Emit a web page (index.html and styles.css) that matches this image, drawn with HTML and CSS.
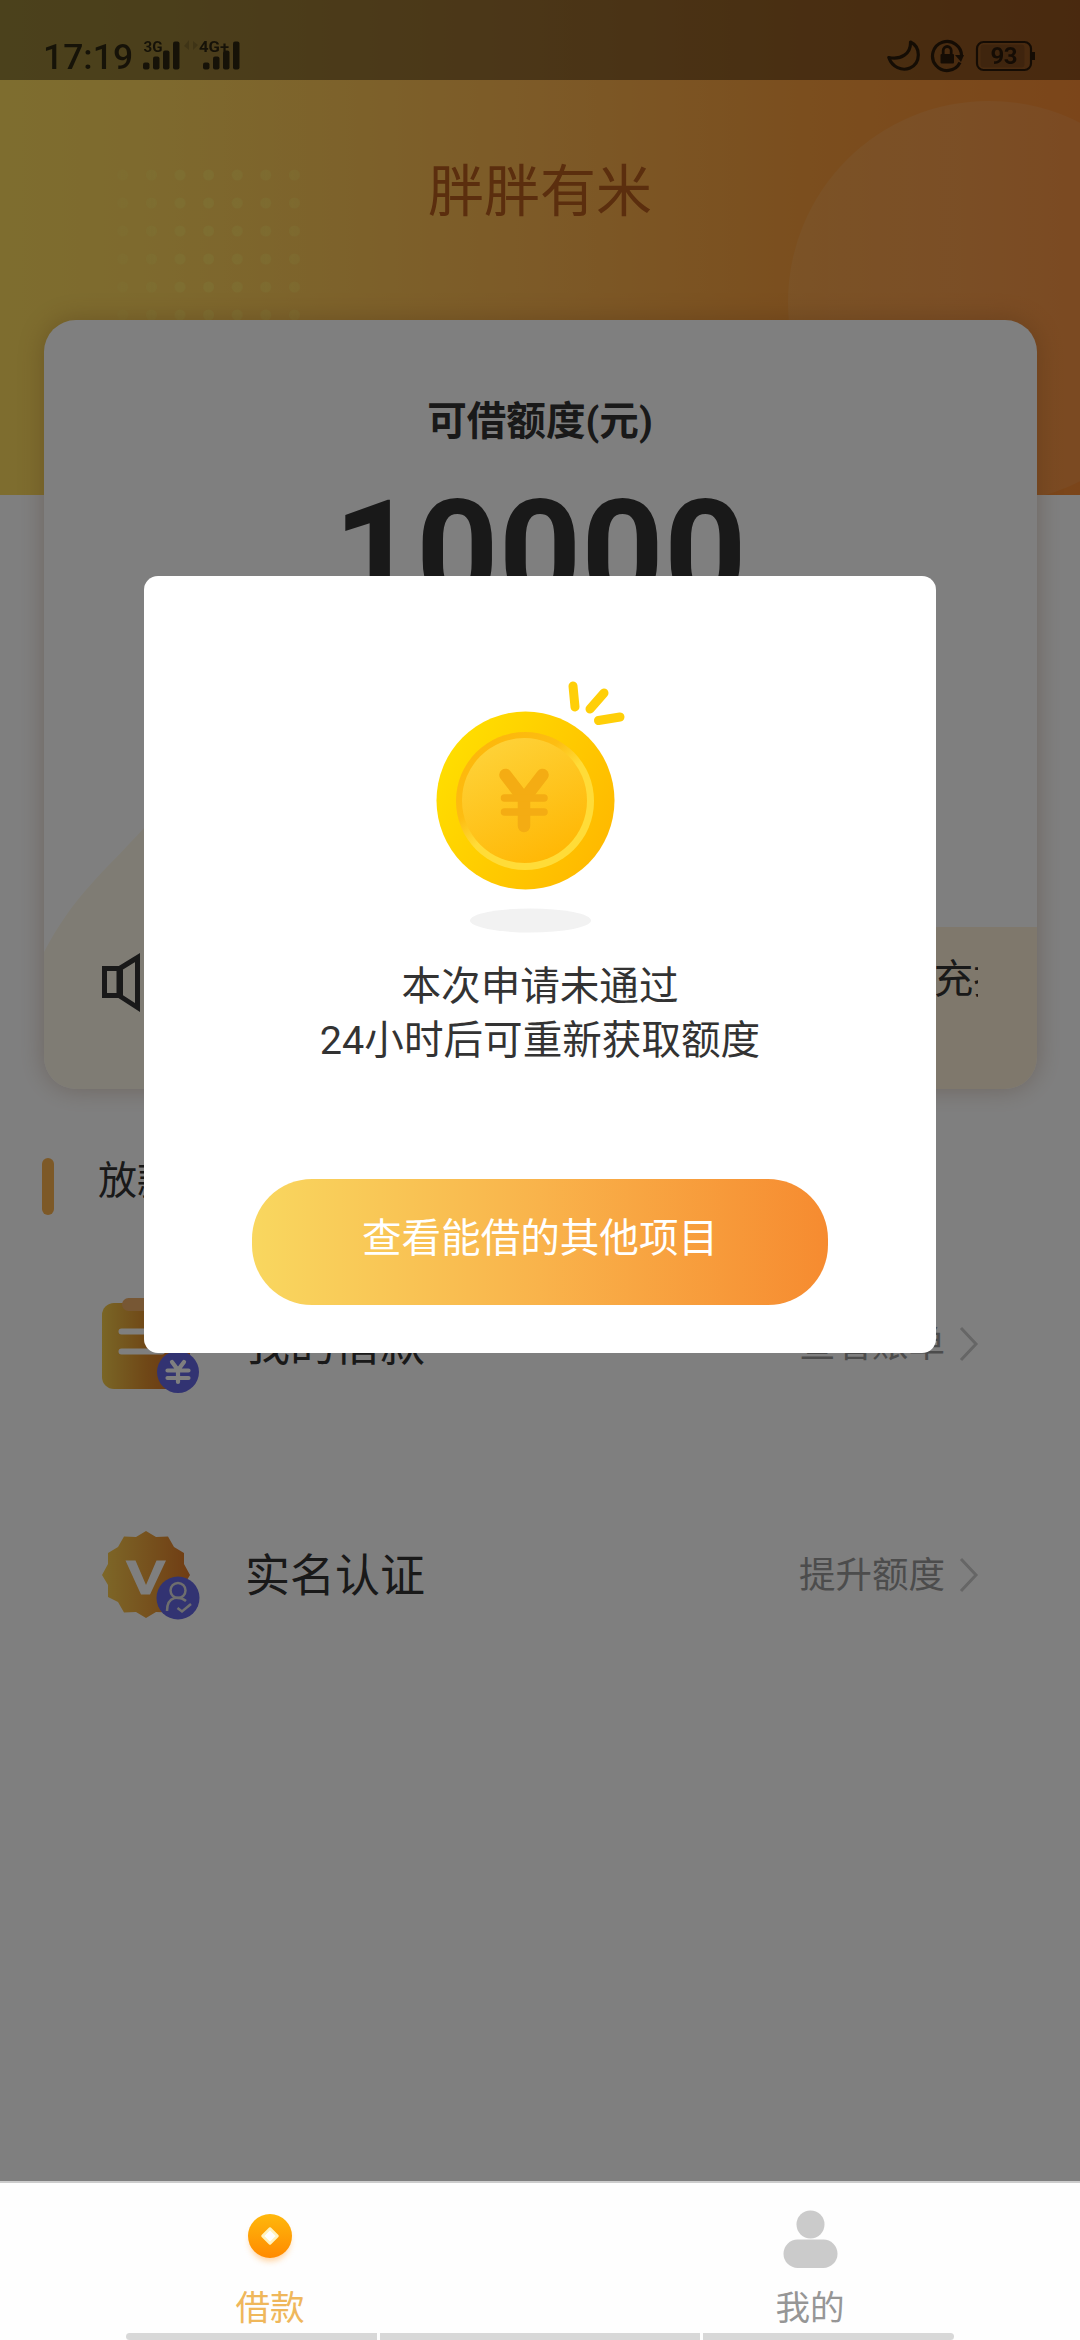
FILE: index.html
```html
<!DOCTYPE html>
<html lang="zh-CN">
<head>
<meta charset="utf-8">
<title>胖胖有米</title>
<link rel="stylesheet" href="styles.css">
</head>
<body>
<div class="app">
  <div class="page">
    <header class="hero">
      <svg class="hero-art" width="1080" height="495" viewBox="0 0 1080 495">
        <defs>
          <linearGradient id="dotFade" x1="80" x2="300" y1="0" y2="0" gradientUnits="userSpaceOnUse">
            <stop offset="0" stop-color="#fce468" stop-opacity=".1"/>
            <stop offset=".5" stop-color="#fce468" stop-opacity=".65"/>
            <stop offset="1" stop-color="#fce468" stop-opacity=".4"/>
          </linearGradient>
          <pattern id="dots" x="108.500" y="161" width="28.600" height="28" patternUnits="userSpaceOnUse">
            <circle cx="14.300" cy="14" r="5.500" fill="#fff"/>
          </pattern>
          <mask id="dotMask"><rect x="108.500" y="161" width="200" height="168" fill="url(#dots)"/></mask>
          <linearGradient id="discFade" x1="788" x2="1190" y1="0" y2="0" gradientUnits="userSpaceOnUse">
            <stop offset="0" stop-color="#fff" stop-opacity=".08"/>
            <stop offset=".4" stop-color="#fff" stop-opacity=".1"/>
            <stop offset="1" stop-color="#fff" stop-opacity=".06"/>
          </linearGradient>
        </defs>
        <rect x="100" y="161" width="209" height="168" fill="url(#dotFade)" mask="url(#dotMask)"/>
        <circle cx="989" cy="302" r="201" fill="url(#discFade)"/>
      </svg>
      <h1 class="brand">胖胖有米</h1>
    </header>

    <section class="card">
      <svg class="card-art" width="993" height="769" viewBox="0 0 993 769">
        <path d="M0 632 C30 575 60 552 100 508 C200 400 420 380 560 500 C650 590 720 640 880 650 V769 H0Z" fill="#fff9e9"/>
        <path d="M500 769 C560 640 740 607 900 607 H993 V769Z" fill="#fff1d8"/>
      </svg>
      <div class="card-label">可借额度(元)</div>
      <div class="card-amount">10000</div>
      <div class="notice">
        <svg class="horn" width="60" height="62" viewBox="0 0 60 62" fill="none" stroke="#333" stroke-width="5">
          <path d="M2.500 17.500 H17 V44.500 H2.500Z"/>
          <path d="M18.500 17 L35.500 6.500 V56.500 L18.500 45.500Z"/>
          <path d="M45 20 Q54 32 45 44"/>
        </svg>
        <div class="ticker"><span>充提</span></div>
      </div>
    </section>

    <div class="tip"><i class="tip-bar"></i><span>放款</span></div>

    <div class="row">
      <svg class="row-icon" width="98" height="98" viewBox="0 0 98 98">
        <defs>
          <linearGradient id="gold"><stop offset="0" stop-color="#fcd050"/><stop offset="1" stop-color="#e07a28"/></linearGradient>
          <linearGradient id="board"><stop offset="0" stop-color="#f4cc4c"/><stop offset=".5" stop-color="#e0902e"/><stop offset=".8" stop-color="#d8742a"/></linearGradient>
        </defs>
        <rect x="0" y="7" width="88" height="86" rx="12" fill="url(#board)"/>
        <rect x="20" y="2" width="46" height="13" rx="6.500" fill="#efae68"/>
        <path d="M19.500 35.500 H66 M19.500 55.500 H60" stroke="#fff" stroke-width="6" stroke-linecap="round"/>
        <circle cx="76" cy="76" r="21" fill="#6466e4"/>
        <path d="M70 66 L76 74 L82 66 M76 74 V86 M65.500 74.500 H86.500 M65.500 82 H86.500" fill="none" stroke="#fff" stroke-width="4.200" stroke-linecap="round"/>
      </svg>
      <span class="row-title">我的借款</span>
      <span class="row-note">查看账单</span>
      <svg class="chevron" width="20" height="36" viewBox="0 0 20 36"><path d="M2 2 L17 18 L2 34" fill="none" stroke="#ccc" stroke-width="3"/></svg>
    </div>

    <div class="row">
      <svg class="row-icon" width="98" height="98" viewBox="0 0 98 98">
        <path d="M44 4 L54 10 L66 9.500 L72 20 L82 26 V37 L88 48 L82 58 V70 L72 75 L66 85.500 L54 85 L44 91 L34 85 L22 85.500 L16 75 L6 70 V58 L0 48 L6 37 V26 L16 20 L22 9.500 L34 10Z" fill="url(#gold)"/>
        <path d="M23.500 33.500 H33.500 L44 58 L54.500 33.500 H64 L48 67.500 H39Z" fill="#fff"/>
        <circle cx="76" cy="71" r="21.500" fill="#6466e4"/>
        <circle cx="76" cy="63.500" r="7.500" fill="none" stroke="#ddd" stroke-width="2.500"/>
        <path d="M65 84 C65 68 78 69 84 74 M75.500 81 L80 84.500 L89 77" fill="none" stroke="#ddd" stroke-width="2.500"/>
      </svg>
      <span class="row-title">实名认证</span>
      <span class="row-note">提升额度</span>
      <svg class="chevron" width="20" height="36" viewBox="0 0 20 36"><path d="M2 2 L17 18 L2 34" fill="none" stroke="#ccc" stroke-width="3"/></svg>
    </div>
  </div>

  <nav class="tabs">
    <div class="tab tab-on">
      <svg width="60" height="66" viewBox="0 0 60 66">
        <defs>
          <linearGradient id="tabGold" x2="0" y2="1"><stop offset="0" stop-color="#ffb80c"/><stop offset="1" stop-color="#ff8a00"/></linearGradient>
          <filter id="glow" x="-50%" y="-50%" width="200%" height="200%"><feGaussianBlur stdDeviation="3"/></filter>
        </defs>
        <circle cx="30" cy="36" r="20" fill="#ffb35c" opacity=".6" filter="url(#glow)"/>
        <circle cx="30" cy="31" r="22" fill="url(#tabGold)"/>
        <path d="M30 23.500 L37.500 31 L30 38.500 L22.500 31Z" fill="#fff" stroke="#fff3c0" stroke-width="2.500" stroke-linejoin="round"/>
      </svg>
      <span>借款</span>
    </div>
    <div class="tab">
      <svg width="60" height="66" viewBox="0 0 60 66" fill="#cbcbcb">
        <circle cx="30.500" cy="19.500" r="14"/>
        <rect x="3.500" y="34.500" width="54" height="28.500" rx="14.200"/>
      </svg>
      <span>我的</span>
    </div>
  </nav>

  <div class="overlay">
    <div class="dialog">
      <svg class="coin" width="280" height="280" viewBox="0 0 280 280">
        <defs>
          <linearGradient id="rim" x1="0" y1=".2" x2="1" y2=".8"><stop offset="0" stop-color="#ffe000"/><stop offset="1" stop-color="#ffb700"/></linearGradient>
          <linearGradient id="groove" x1=".2" y1=".1" x2=".75" y2=".8"><stop offset="0" stop-color="#fdb80c"/><stop offset=".35" stop-color="#fdbd12"/><stop offset=".6" stop-color="#ffdc38"/><stop offset="1" stop-color="#ffdc38"/></linearGradient>
          <linearGradient id="face" x1=".2" y1="0" x2=".7" y2="1"><stop offset="0" stop-color="#fed33a"/><stop offset="1" stop-color="#ffb704"/></linearGradient>
        </defs>
        <ellipse cx="130.500" cy="260.500" rx="60.500" ry="12" fill="#f2f2f2"/>
        <circle cx="125.500" cy="140.500" r="89" fill="url(#rim)"/>
        <circle cx="125" cy="141" r="69" fill="url(#groove)"/>
        <circle cx="124.500" cy="140.500" r="62.500" fill="url(#face)"/>
        <g fill="none" stroke="#f4ac13" stroke-linecap="round">
          <path d="M105.500 115 L124 139 L142.500 115 M124 138 V166" stroke-width="12.500"/>
          <path d="M104.500 138 H144 M104.500 152 H144" stroke-width="7.500"/>
        </g>
        <path d="M173 26 L175 47 M204 33 L190 49 M198.500 60.500 L220 57" fill="none" stroke="#ffcf08" stroke-width="9" stroke-linecap="round"/>
      </svg>
      <p class="dialog-text">本次申请未通过<br>24小时后可重新获取额度</p>
      <button class="dialog-btn">查看能借的其他项目</button>
    </div>
  </div>

  <div class="status">
    <span class="clock">17:19</span>
    <svg class="signals" width="110" height="40" viewBox="0 0 110 40" fill="#000">
      <g font-family="Roboto, sans-serif" font-weight="700" font-size="15.500">
        <text x="0.500" y="15.500" textLength="19" lengthAdjust="spacingAndGlyphs">3G</text><text x="56" y="15.500" textLength="30" lengthAdjust="spacingAndGlyphs">4G+</text>
      </g>
      <rect x="0" y="26.500" width="6.500" height="7" rx="2"/><rect x="10" y="20.500" width="6.500" height="13" rx="2"/><rect x="20" y="14.500" width="6.500" height="19" rx="2"/><rect x="30" y="5.500" width="6.500" height="28" rx="2"/>
      <path d="M46 4 V14 L41 10 Z M50 5 V14 L55 9 Z" opacity=".22"/>
      <rect x="60" y="26.500" width="6.500" height="7" rx="2"/><rect x="70" y="20.500" width="6.500" height="13" rx="2"/><rect x="80" y="14.500" width="6.500" height="19" rx="2"/><rect x="90" y="5.500" width="6.500" height="28" rx="2"/>
    </svg>
    <svg class="sys" width="150" height="34" viewBox="0 0 150 34">
      <g fill="none" stroke="#000" stroke-width="3.200" stroke-linejoin="round">
        <path d="M23.500 3 C34 8 34 24 23 29 C15 32.500 5 28 1.800 18.500 C14 21 24 15 23.500 3Z"/>
        <path d="M73 23.500 A14.500 14.500 0 1 1 74.500 18" />
      </g>
      <path d="M68 16 H77 L74 23Z"/>
      <rect x="53.500" y="15" width="13.500" height="9.500" rx="1"/>
      <path d="M56.200 15.500 V11.500 A4 4 0 0 1 64.200 11.500 V15.500" fill="none" stroke="#000" stroke-width="2.800"/>
      <rect x="90" y="3" width="54" height="28" rx="6.500" fill="none" stroke="#000" stroke-width="2.200"/>
      <rect x="93.500" y="5.500" width="44" height="23" rx="3" opacity=".18"/>
      <path d="M146.500 13 V21" stroke="#000" stroke-width="3"/>
      <text x="103.500" y="25.300" font-family="Roboto, sans-serif" font-weight="700" font-size="24" textLength="27">93</text>
    </svg>
  </div>
  <div class="navkeys"><i></i><i class="mid"></i><i></i></div>
</div>
</body>
</html>
```
FILE: styles.css
```css
* { box-sizing: border-box; margin: 0; padding: 0; }
body { background: #fff; font-family: Roboto, "Noto Sans CJK SC", sans-serif; color: #333; }
.app { position: relative; width: 1080px; height: 2340px; overflow: hidden; display: flex; flex-direction: column; }
.page { flex: 1; min-height: 0; background: #fff; }

.hero { position: relative; height: 495px; margin-bottom: -175px; padding-top: 150px; background: linear-gradient(90deg, #fcdb5e 0%, #fcd35c 15%, #fab44f 50%, #f69c3c 75%, #f68b34 100%); }
.hero-art { position: absolute; left: 0; top: 0; }
.brand { position: relative; font-size: 56px; line-height: 84px; font-weight: 400; text-align: center; color: #b65c1c; }

.card { position: relative; width: 993px; height: 769px; margin: 0 auto; border-radius: 32px; background: #fff; box-shadow: 0 0 26px rgba(120, 60, 20, .28); display: flex; flex-direction: column; align-items: center; padding-top: 73px; }
.card-art { position: absolute; left: 0; bottom: 0; border-radius: 32px; }
.card-label { position: relative; font-size: 39.600px; line-height: 58px; font-weight: 700; }
.card-amount { position: relative; font-size: 144px; line-height: 168px; font-weight: 700; margin-top: 19px; }
.notice { position: relative; width: 876px; margin-top: auto; margin-bottom: 73px; display: flex; align-items: center; height: 70px; gap: 30px; }
.horn { flex: none; margin-top: 2px; }
.ticker { flex: 1; height: 70px; overflow: hidden; display: flex; justify-content: flex-end; font-size: 39.600px; line-height: 68px; white-space: nowrap; }
.ticker span { margin-right: -35px; }

.tip { display: flex; align-items: flex-start; gap: 44px; height: 57px; margin: 69px 0 0 42px; font-size: 39px; line-height: 46px; }
.tip-bar { width: 12px; height: 57px; border-radius: 6px; background: #fbb34e; }

.row { display: flex; align-items: center; height: 231px; padding: 0 101px 0 102px; }
.tip + .row { margin-top: 14px; }
.row-icon { flex: none; margin-right: 45px; }
.row-title { font-size: 45px; flex: 1; padding-bottom: 6px; }
.row-note { font-size: 36.500px; color: #999; margin-right: 14px; padding-bottom: 6px; }
.chevron { margin-bottom: 2px; }

.tabs { flex: none; height: 159px; background: #fefefe; border-top: 2px solid #ccc; display: flex; z-index: 2; }
.tab { flex: 1; display: flex; flex-direction: column; align-items: center; padding-top: 22px; font-size: 34.600px; line-height: 50px; color: #969696; }
.tab span { margin-top: 12px; }
.tab-on { color: #efb75b; }

.overlay { position: absolute; left: 0; top: 0; width: 1080px; height: 2181px; background: rgba(0, 0, 0, .5); }
.dialog { width: 792px; height: 777px; margin: 576px auto 0; border-radius: 14px; background: #fff; display: flex; flex-direction: column; align-items: center; padding-top: 84px; }
.dialog-text { margin-top: 20px; font-size: 39.600px; line-height: 54px; text-align: center; }
.dialog-btn { margin-top: 111px; width: 576px; height: 126px; border: 0; border-radius: 60px; padding-bottom: 15px; font: inherit; font-size: 39.600px; color: #fff; background: linear-gradient(90deg, #f9d75f, #f9b34b 50%, #f68b30); }

.status { position: absolute; left: 0; top: 0; width: 1080px; height: 80px; background: rgba(0, 0, 0, .4); display: flex; align-items: flex-start; padding: 36px 43px 0; }
.clock { font-size: 35.500px; line-height: 42px; font-weight: 500; width: 100px; opacity: .7; color: #000; }
.signals { flex: none; opacity: .7; }
.sys { flex: none; margin-left: auto; margin-top: 3px; opacity: .7; }

.navkeys { position: absolute; left: 126px; bottom: 0; width: 828px; height: 7px; display: flex; gap: 3px; z-index: 3; }
.navkeys i { width: 251px; background: #d8d8d8; border-radius: 5px 0 0 5px; }
.navkeys i:last-child { border-radius: 0 5px 5px 0; }
.navkeys .mid { width: 320px; border-radius: 0; }
```
